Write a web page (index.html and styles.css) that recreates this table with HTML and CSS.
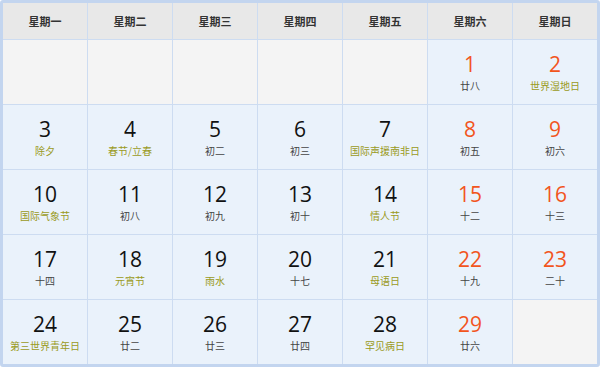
FILE: index.html
```html
<!DOCTYPE html>
<html lang="zh-CN">
<head>
<meta charset="utf-8">
<title>日历</title>
<link rel="stylesheet" href="styles.css">
</head>
<body>
<div class="cal">
  <div class="head">星期一</div>
  <div class="head">星期二</div>
  <div class="head">星期三</div>
  <div class="head">星期四</div>
  <div class="head">星期五</div>
  <div class="head">星期六</div>
  <div class="head">星期日</div>

  <div class="cell empty"></div>
  <div class="cell empty"></div>
  <div class="cell empty"></div>
  <div class="cell empty"></div>
  <div class="cell empty"></div>
  <div class="cell"><span class="num red">1</span><span class="sub">廿八</span></div>
  <div class="cell"><span class="num red">2</span><span class="sub fest">世界湿地日</span></div>

  <div class="cell"><span class="num">3</span><span class="sub fest">除夕</span></div>
  <div class="cell"><span class="num">4</span><span class="sub fest">春节/立春</span></div>
  <div class="cell"><span class="num">5</span><span class="sub">初二</span></div>
  <div class="cell"><span class="num">6</span><span class="sub">初三</span></div>
  <div class="cell"><span class="num">7</span><span class="sub fest">国际声援南非日</span></div>
  <div class="cell"><span class="num red">8</span><span class="sub">初五</span></div>
  <div class="cell"><span class="num red">9</span><span class="sub">初六</span></div>

  <div class="cell"><span class="num">10</span><span class="sub fest">国际气象节</span></div>
  <div class="cell"><span class="num">11</span><span class="sub">初八</span></div>
  <div class="cell"><span class="num">12</span><span class="sub">初九</span></div>
  <div class="cell"><span class="num">13</span><span class="sub">初十</span></div>
  <div class="cell"><span class="num">14</span><span class="sub fest">情人节</span></div>
  <div class="cell"><span class="num red">15</span><span class="sub">十二</span></div>
  <div class="cell"><span class="num red">16</span><span class="sub">十三</span></div>

  <div class="cell"><span class="num">17</span><span class="sub">十四</span></div>
  <div class="cell"><span class="num">18</span><span class="sub fest">元宵节</span></div>
  <div class="cell"><span class="num">19</span><span class="sub fest">雨水</span></div>
  <div class="cell"><span class="num">20</span><span class="sub">十七</span></div>
  <div class="cell"><span class="num">21</span><span class="sub fest">母语日</span></div>
  <div class="cell"><span class="num red">22</span><span class="sub">十九</span></div>
  <div class="cell"><span class="num red">23</span><span class="sub">二十</span></div>

  <div class="cell"><span class="num">24</span><span class="sub fest">第三世界青年日</span></div>
  <div class="cell"><span class="num">25</span><span class="sub">廿二</span></div>
  <div class="cell"><span class="num">26</span><span class="sub">廿三</span></div>
  <div class="cell"><span class="num">27</span><span class="sub">廿四</span></div>
  <div class="cell"><span class="num">28</span><span class="sub fest">罕见病日</span></div>
  <div class="cell"><span class="num red">29</span><span class="sub">廿六</span></div>
  <div class="cell empty"></div>
</div>
</body>
</html>
```
FILE: styles.css
```css
html, body {
  margin: 0;
  padding: 0;
  background: #ffffff;
}

.cal {
  box-sizing: border-box;
  width: 600px;
  height: 367px;
  border: 3px solid #c3d5ef;
  border-radius: 3px;
  background: #cddcf1;
  display: grid;
  grid-template-columns: repeat(7, 1fr);
  grid-template-rows: 36px repeat(5, 64px);
  gap: 1px;
  font-family: "Noto Sans CJK SC", "Noto Sans", sans-serif;
}

.head {
  background: #e8e8e8;
  color: #333333;
  font-size: 11px;
  font-weight: bold;
  display: flex;
  align-items: center;
  justify-content: center;
}

.cell {
  background: #eaf2fb;
  display: flex;
  flex-direction: column;
  align-items: center;
  justify-content: center;
}

.cell.empty {
  background: #f4f4f4;
}

.num {
  font-family: "Open Sans", "Liberation Sans", sans-serif;
  font-size: 21px;
  line-height: 24px;
  color: #111111;
}

.num.red {
  color: #f2551d;
}

.sub {
  margin-top: 3px;
  font-size: 10px;
  line-height: 13px;
  color: #444444;
  white-space: nowrap;
}

.sub.fest {
  color: #9a9a1c;
}
```
